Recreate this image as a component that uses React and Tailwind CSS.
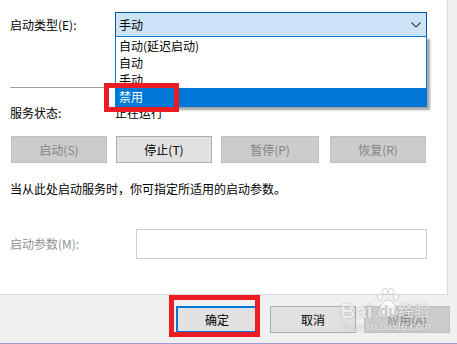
import React from "react";

const font = { fontFamily: '"Noto Sans CJK SC", "Microsoft YaHei", sans-serif' };

function Btn({ children, w, disabled, primary, className = "" }) {
  const base = disabled
    ? "bg-[#cccccc] border-[#bfbfbf] text-[#838383]"
    : primary
    ? "bg-[#e1e1e1] border-[#0078d7] border-2 text-black"
    : "bg-[#e1e1e1] border-[#adadad] text-black";
  return (
    <div
      className={`h-[27px] ${w} border ${base} flex items-center justify-center text-[12px] leading-[16px] shrink-0 ${className}`}
    >
      {children}
    </div>
  );
}

export default function App() {
  return (
    <div
      className="relative w-[457px] h-[344px] bg-[#f0f0f0] overflow-hidden text-black text-[12px] leading-[16px]"
      style={font}
    >
      <div className="flex flex-col h-[343px]">
        {/* white panel */}
        <div className="w-[448px] h-[295px] bg-white border-r border-b border-[#dadada] flex flex-col shrink-0">
          {/* startup type */}
          <div className="mt-[12px] h-[25px] flex items-center">
            <div className="pl-[10px] w-[115px]">启动类型(E):</div>
            <div className="w-[312px] h-[25px] border border-[#0054a6] bg-[#cce4f7] flex items-center justify-between pl-[3px] pr-[5px]">
              <span>手动</span>
              <svg width="10" height="6" viewBox="0 0 10 6">
                <polyline points="0.5,0.5 5,5 9.5,0.5" fill="none" stroke="#404040" strokeWidth="1.2" />
              </svg>
            </div>
          </div>
          {/* separator */}
          <div className="mt-[50px] ml-[10px] w-[417px] h-px bg-[#a0a0a0]" />
          {/* service status */}
          <div className="mt-[17px] flex">
            <div className="pl-[10px] w-[115px]">服务状态:</div>
            <div>正在运行</div>
          </div>
          {/* control buttons */}
          <div className="mt-[15px] flex pl-[11px]">
            <Btn w="w-[96px]" disabled>启动(S)</Btn>
            <Btn w="w-[96px]" className="ml-[9px]">停止(T)</Btn>
            <Btn w="w-[98px]" disabled className="ml-[9px]">暂停(P)</Btn>
            <Btn w="w-[96px]" disabled className="ml-[11px]">恢复(R)</Btn>
          </div>
          <div className="mt-[18px] pl-[10px]">当从此处启动服务时，你可指定所适用的启动参数。</div>
          {/* params */}
          <div className="mt-[32px] flex items-center">
            <div className="pl-[10px] w-[136px] text-[#8f8f8f]">启动参数(M):</div>
            <div className="w-[291px] h-[30px] border border-[#cccccc] bg-white" />
          </div>
        </div>
        {/* bottom buttons */}
        <div className="mt-[11px] flex pl-[176px]">
          <Btn w="w-[82px]" primary>确定</Btn>
          <Btn w="w-[86px]" className="ml-[12px]">取消</Btn>
          <Btn w="w-[86px]" disabled className="ml-[8px]">应用(A)</Btn>
        </div>
      </div>
      <div className="h-px bg-[#9b9bd6]" />

      {/* dropdown list overlay */}
      <div className="absolute left-[115px] top-[36px] w-[312px] h-[71px] border border-[#0078d7] bg-white shadow-[3px_3px_2px_rgba(0,0,0,0.35)]">
        <div className="h-[17px] leading-[17px] pl-[3px]">自动(延迟启动)</div>
        <div className="h-[17px] leading-[17px] pl-[3px]">自动</div>
        <div className="h-[17px] leading-[17px] pl-[3px]">手动</div>
        <div className="h-[18px] leading-[18px] pl-[3px] bg-[#0078d7] text-white">禁用</div>
      </div>

      {/* red annotation boxes */}
      <div className="absolute left-[104px] top-[83px] w-[75px] h-[29px] border-[5px] border-[#ec1c24]" />
      <div className="absolute left-[169px] top-[295px] w-[91px] h-[42px] border-[5px] border-[#ec1c24]" />

      {/* watermark */}
      <div className="absolute left-[340px] top-[286px] w-[95px] h-[48px] pointer-events-none">
        <div
          className="absolute left-0 top-[14px] text-[21px] leading-[21px] font-bold text-white/80"
          style={{ fontFamily: '"Liberation Sans", Arial, sans-serif', textShadow: "0 0 1.5px rgba(0,0,0,0.35)" }}
        >
          Bai
        </div>
        <svg className="absolute left-[36px] top-[1px]" width="24" height="34" viewBox="0 0 24 34">
          <g fill="rgba(255,255,255,0.75)" stroke="rgba(0,0,0,0.2)" strokeWidth="0.8">
            <ellipse cx="4" cy="10" rx="2.6" ry="3.2" />
            <ellipse cx="9" cy="4.5" rx="2.6" ry="3.2" />
            <ellipse cx="15" cy="4.5" rx="2.6" ry="3.2" />
            <ellipse cx="20" cy="10" rx="2.6" ry="3.2" />
            <path d="M12 13 C7 13 2 22 2 26 C2 30 6 31 12 29.5 C18 31 22 30 22 26 C22 22 17 13 12 13 Z" />
          </g>
        </svg>
        <div
          className="absolute left-[39px] top-[17px] text-[15px] leading-[15px] font-bold text-[#bdbdbd]/80"
          style={{ fontFamily: '"Liberation Sans", Arial, sans-serif' }}
        >
          du
        </div>
        <div
          className="absolute left-[58px] top-[13px] text-[16px] leading-[20px] text-white/80"
          style={{ ...font, textShadow: "0 0 1.5px rgba(0,0,0,0.35)" }}
        >
          经验
        </div>
        <div
          className="absolute left-[2px] top-[34px] text-[11px] leading-[12px] text-white/80 whitespace-nowrap"
          style={{ fontFamily: '"Liberation Sans", Arial, sans-serif', textShadow: "0 0 1.5px rgba(0,0,0,0.35)" }}
        >
          jingyan.baidu.com
        </div>
      </div>
    </div>
  );
}
